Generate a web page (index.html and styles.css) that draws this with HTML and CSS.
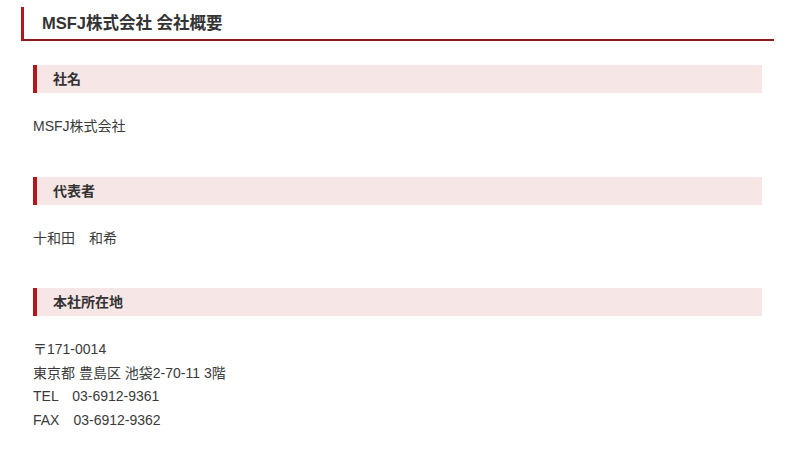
FILE: index.html
```html
<!DOCTYPE html>
<html lang="ja">
<head>
<meta charset="utf-8">
<title>MSFJ株式会社 会社概要</title>
<link rel="stylesheet" href="styles.css">
</head>
<body>
<div class="page">
  <h1 class="page-title">MSFJ株式会社 会社概要</h1>
  <div class="content">
    <section class="item">
      <h2 class="item-head">社名</h2>
      <p class="item-body">MSFJ株式会社</p>
    </section>
    <section class="item">
      <h2 class="item-head">代表者</h2>
      <p class="item-body">十和田　和希</p>
    </section>
    <section class="item">
      <h2 class="item-head">本社所在地</h2>
      <p class="item-body">〒171-0014<br>東京都 豊島区 池袋2-70-11 3階<br>TEL　03-6912-9361<br>FAX　03-6912-9362</p>
    </section>
  </div>
</div>
</body>
</html>
```
FILE: styles.css
```css
* { box-sizing: border-box; }
html, body { margin: 0; padding: 0; background: #fff; }
body {
  font-family: "Liberation Sans", "Noto Sans CJK JP", sans-serif;
  color: #333;
}
.page {
  padding: 7px 26px 0 21px;
}
.page-title {
  margin: 0;
  height: 34px;
  padding-left: 18px;
  border-left: 3px solid #b3171c;
  border-bottom: 2px solid #8e1b1b;
  font-size: 16.5px;
  font-weight: bold;
  line-height: 32px;
  color: #333;
}
.content {
  padding: 24px 12px 0 12px;
}
.item-head {
  margin: 0;
  height: 28px;
  background: #f7e6e6;
  border-left: 4px solid #b3171c;
  padding-left: 16px;
  font-size: 14px;
  font-weight: bold;
  line-height: 28px;
  color: #333;
}
.item-body {
  margin: 22px 0 38px 0;
  font-size: 14px;
  line-height: 23.5px;
  color: #3a3a3a;
}
```
